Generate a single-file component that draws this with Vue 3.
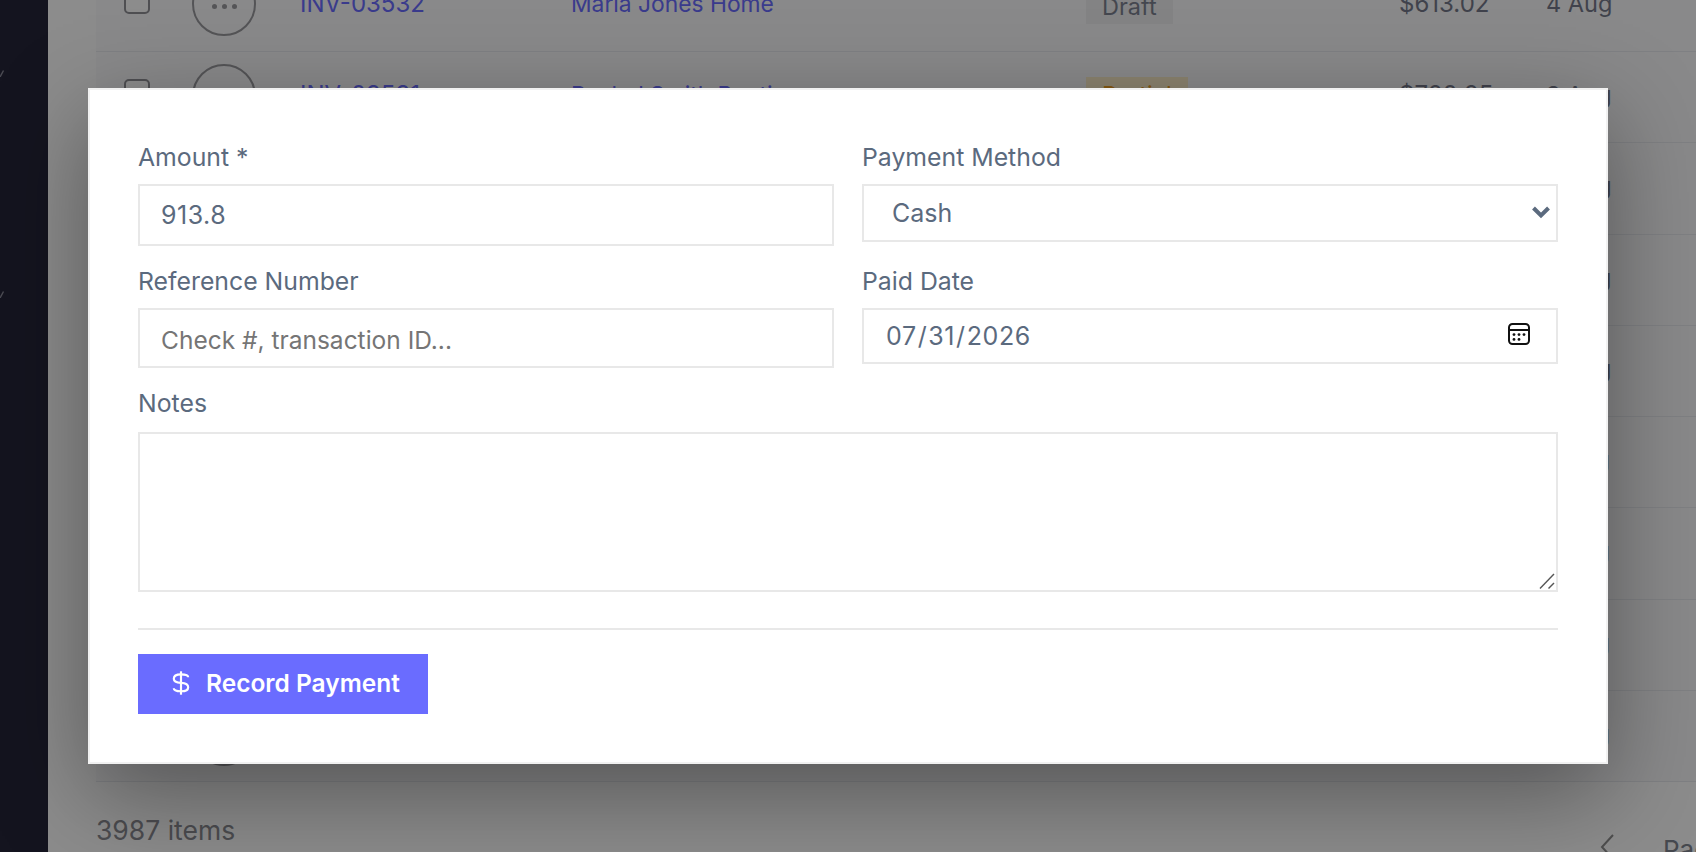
<script setup>
const rows = [
  { id: 'INV-03532', client: 'Maria Jones Home', status: 'Draft', tone: 'draft', amount: '$613.02', date: '4 Aug', dots: true },
  { id: 'INV-03531', client: 'Rachel Smith Boutique', status: 'Partial', tone: 'partial', amount: '$720.25', date: '3 Aug' },
  { date: '3 Aug' },
  { date: '2 Aug' },
  { date: '2 Aug' },
  { date: '1 Aug' },
  { date: '1 Aug' },
  { date: '1 Aug' },
  { date: '1 Aug' }
]
</script>

<template>
  <div class="page">
    <aside class="sidebar">
      <svg class="mark" width="4" height="7" viewBox="0 0 4 7"><path d="M0 7 L3.5 0.5" /></svg>
      <svg class="mark" width="4" height="7" viewBox="0 0 4 7"><path d="M0 7 L3.5 0.5" /></svg>
    </aside>
    <main class="main">
      <div class="table">
        <div v-for="(row, i) in rows" :key="i" class="row">
          <span class="check"></span>
          <span class="avatar">
            <span v-if="row.dots" class="dots"><i></i><i></i><i></i></span>
          </span>
          <a class="link inv">{{ row.id }}</a>
          <a class="link client">{{ row.client }}</a>
          <span class="badge-cell"><span v-if="row.status" class="badge" :class="row.tone">{{ row.status }}</span></span>
          <span class="amount">{{ row.amount }}</span>
          <span class="date">{{ row.date }}</span>
        </div>
      </div>
      <div class="footer">
        <span class="count">3987 items</span>
        <div class="pager">
          <svg class="pager-arrow" width="14" height="28" viewBox="0 0 14 28" fill="none"><path d="M13 2 L2 14 L13 26" stroke="#8e8e8e" stroke-width="2" /></svg>
          <span class="page-label">Page</span>
        </div>
      </div>
    </main>

    <div class="overlay">
      <form class="modal" @submit.prevent>
        <div class="grid">
          <label class="field">
            <span class="label">Amount *</span>
            <input class="control amount-input" type="text" value="913.8" />
          </label>
          <label class="field">
            <span class="label">Payment Method</span>
            <span class="select-wrap">
              <select class="control select">
                <option>Cash</option>
              </select>
              <svg class="chevron" width="20" height="14" viewBox="0 0 20 14" fill="none"><path d="M2.5 3 L10 10.5 L17.5 3" stroke="#5b6a7e" stroke-width="4" /></svg>
            </span>
          </label>
          <label class="field">
            <span class="label">Reference Number</span>
            <input class="control ref-input" type="text" placeholder="Check #, transaction ID..." />
          </label>
          <label class="field">
            <span class="label">Paid Date</span>
            <span class="date-wrap">
              <input class="control date-input" type="date" value="2026-07-31" />
              <svg class="calendar" width="24" height="24" viewBox="0 0 24 24" fill="none">
                <rect x="2" y="2" width="20" height="20" rx="3.5" stroke="#111" stroke-width="2" />
                <path d="M2 8 H22" stroke="#111" stroke-width="2" />
                <g fill="#111">
                  <circle cx="7" cy="12.6" r="1.4" /><circle cx="12" cy="12.6" r="1.4" /><circle cx="17" cy="12.6" r="1.4" />
                  <circle cx="7" cy="17.4" r="1.4" /><circle cx="12" cy="17.4" r="1.4" />
                </g>
              </svg>
            </span>
          </label>
          <label class="field wide">
            <span class="label notes-label">Notes</span>
            <span class="notes-wrap">
              <textarea class="control notes"></textarea>
              <svg class="grip" width="16" height="16" viewBox="0 0 16 16" fill="none" stroke="#555" stroke-width="1.4">
                <path d="M1 15.5 L15 1" /><path d="M9.5 15.5 L15 10" />
              </svg>
            </span>
          </label>
        </div>
        <div class="actions">
          <button class="submit" type="submit">
            <svg width="18" height="26" viewBox="0 0 20 28" fill="none" stroke="#fff" stroke-width="2.4">
              <path d="M10 1 V27" />
              <path d="M18 7.5 C18 5 15 4.5 10 4.5 C5 4.5 2 6 2 9.2 C2 12.6 5 13.5 10 13.8 C15 14.1 18 15.2 18 18.6 C18 22 15 23.2 10 23.2 C5 23.2 2 22.4 2 19.8" />
            </svg>
            <span>Record Payment</span>
          </button>
        </div>
      </form>
    </div>
  </div>
</template>

<style>
html, body { margin: 0; background: #fff; }
</style>

<style scoped>
.page {
  position: relative;
  display: flex;
  width: 1696px;
  height: 852px;
  overflow: hidden;
  background: #fff;
  font-family: Inter, "Liberation Sans", sans-serif;
}
.sidebar {
  flex: 0 0 48px;
  background: #26263a;
  display: flex;
  flex-direction: column;
  padding-top: 70px;
  gap: 214px;
}
.mark { display: block; }
.mark path { stroke: #8a8a98; stroke-width: 1.4; fill: none; }
.main {
  flex: 1;
  min-width: 0;
  padding-left: 48px;
  display: flex;
  flex-direction: column;
}
.table { margin-top: -39.25px; }
.row {
  box-sizing: border-box;
  height: 91.25px;
  display: grid;
  grid-template-columns: 96px 108px 271px 515px 313px 147px 64px;
  align-items: center;
  border-bottom: 1px solid #e8e9ee;
  background: #f9f9fb;
  color: #76798a;
}
.check {
  box-sizing: border-box;
  width: 26px;
  height: 26px;
  margin: -10px 0 0 28px;
  border: 2px solid #909096;
  border-radius: 5px;
  background: #fff;
}
.avatar {
  box-sizing: border-box;
  width: 64px;
  height: 64px;
  border: 2px solid #9a9a9e;
  border-radius: 50%;
  margin-top: -3px;
  display: flex;
  justify-content: center;
  padding-top: 30px;
}
.dots { display: flex; gap: 5px; height: 5px; }
.dots i { width: 5px; height: 5px; border-radius: 50%; background: #9a9a9e; }
.link { color: #6a6cff; white-space: nowrap; margin-top: -5px; }
.inv { font-size: 24px; }
.client { font-size: 22.8px; }
.badge-cell { display: flex; }
.badge {
  padding: 9px 16px 4px;
  font-size: 23.5px;
  line-height: 26px;
  white-space: nowrap;
  margin-top: -2px;
}
.badge.draft { background: #eeeef0; color: #7d8290; }
.badge.partial { padding-top: 5px; padding-bottom: 8px; background: #fdeecb; color: #f0a020; }
.amount { font-size: 24px; white-space: nowrap; margin-top: -5px; }
.date { font-size: 23.5px; text-align: right; white-space: nowrap; margin-top: -5px; }
.footer {
  display: flex;
  justify-content: space-between;
  align-items: flex-start;
  padding-top: 31px;
}
.count { font-size: 26.5px; line-height: 34px; color: #8a8b92; }
.pager {
  display: flex;
  align-items: flex-start;
  gap: 49px;
  margin-top: 20px;
  margin-right: -24px;
  width: 120px;
  height: 30px;
}
.pager-arrow { flex: none; }
.page-label { font-size: 26px; line-height: 28px; margin-top: 3px; color: #808590; }
.overlay {
  position: absolute;
  inset: 0;
  background: rgba(0, 0, 0, 0.45);
}
.modal {
  position: absolute;
  left: 88px;
  top: 88px;
  box-sizing: border-box;
  width: 1520px;
  height: 676px;
  padding: 48px;
  background: #fff;
  border: 2px solid #f1f1f1;
  box-shadow: 0 30px 90px rgba(0, 0, 0, 0.38);
  color: #5b6a7e;
}
.grid {
  display: grid;
  grid-template-columns: 696px 696px;
  column-gap: 28px;
  row-gap: 16px;
  align-items: start;
}
.field { display: flex; flex-direction: column; }
.field.wide { grid-column: 1 / 3; margin-top: 2px; }
.label {
  display: block;
  height: 46px;
  font-size: 24.8px;
  line-height: 38px;
  color: #5b6a7e;
}
.notes-label { line-height: 35px; }
.control {
  box-sizing: border-box;
  width: 100%;
  margin: 0;
  border: 2px solid #e8e8e8;
  border-radius: 0;
  background: #fff;
  font-family: inherit;
  font-size: 25px;
  color: #5b6a7e;
  outline: none;
}
.amount-input { height: 62px; padding: 0 21px; letter-spacing: 0.5px; }
.ref-input { height: 60px; padding: 3px 21px 0; font-size: 24.5px; }
.ref-input::placeholder { color: #757575; opacity: 1; }
.select-wrap, .date-wrap, .notes-wrap { position: relative; display: block; }
.select {
  display: block;
  height: 58px;
  padding: 0 28px;
  appearance: none;
}
.chevron { position: absolute; right: 7px; top: 21px; }
.date-input { display: block; height: 56px; padding: 0 21px; letter-spacing: 0.6px; }
.date-input::-webkit-calendar-picker-indicator { opacity: 0; }
.calendar { position: absolute; right: 27px; top: 14px; pointer-events: none; }
.notes { display: block; height: 160px; padding: 12px 21px; resize: none; }
.grip { position: absolute; right: 3px; bottom: 3px; pointer-events: none; }
.actions {
  margin-top: 36px;
  padding-top: 24px;
  border-top: 2px solid #e8e8e8;
}
.submit {
  display: flex;
  align-items: center;
  gap: 16px;
  box-sizing: border-box;
  width: 290px;
  height: 60px;
  padding: 0 0 2px 34px;
  border: 0;
  background: #6a6cff;
  color: #fff;
  font-family: inherit;
  font-size: 24.5px;
  font-weight: 600;
}
</style>
